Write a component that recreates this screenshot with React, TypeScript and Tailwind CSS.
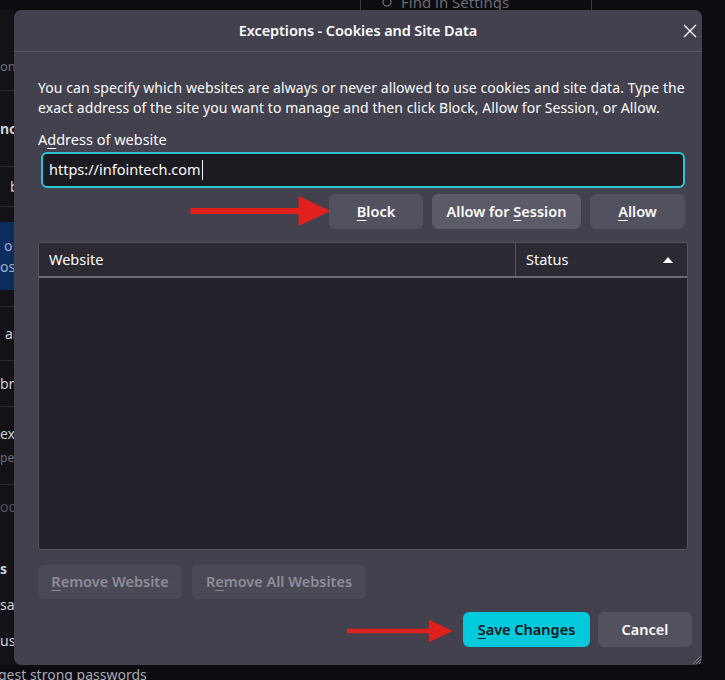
import React from "react";

const U = ({ children }: { children: React.ReactNode }) => (
  <span className="underline decoration-1 underline-offset-[3px]">{children}</span>
);

const Arrow = ({ className }: { className: string }) => (
  <svg className={className} viewBox="0 0 140 32" fill="none">
    <rect x="0" y="13" width="112" height="6" fill="#e0201c" />
    <path d="M108 1 L140 16 L108 31 Z" fill="#e0201c" />
  </svg>
);

const Backdrop = () => (
  <div className="flex h-full flex-col">
    <div className="flex h-[10px]">
      <div className="w-[360px]" />
      <div className="relative -mt-[4px] flex h-[14px] w-[232px] items-center gap-2 border-x border-[#3a3944] pl-[20px] text-[15px] leading-none text-[#6b6a75]">
        <svg width="12" height="12" viewBox="0 0 12 12" fill="none" stroke="#6b6a75" strokeWidth="1.3">
          <circle cx="6" cy="5" r="4" />
        </svg>
        <span className="-mt-[2px]">Find in Settings</span>
      </div>
    </div>
    <div className="flex flex-1">
      <div className="flex w-[14px] flex-col overflow-hidden whitespace-nowrap bg-[#131217] text-[14px] text-[#8f8f99]">
        <div className="h-[34px]" />
        <div className="flex h-[46px] items-center text-[13px] text-[#6f6e79]">on</div>
        <div className="flex h-[76px] items-center border-t border-[#2a2931] font-bold text-[#cfcfd6]">nc</div>
        <div className="flex h-[40px] items-center border-t border-[#2a2931] pl-[10px] text-[#cfcfd6]">br</div>
        <div className="h-[16px] border-t border-[#2a2931]" />
        <div className="flex h-[68px] flex-col justify-center bg-[#0d2c5e] pl-[4px] leading-[21px] text-[#9fb0cc]">
          <span>o</span>
          <span className="-ml-[4px]">os</span>
        </div>
        <div className="h-[16px]" />
        <div className="flex h-[54px] items-center border-t border-[#2a2931] pl-[5px] text-[#cfcfd6]">ar</div>
        <div className="flex h-[46px] items-center border-t border-[#2a2931] text-[#cfcfd6]">br</div>
        <div className="flex h-[78px] flex-col justify-center border-t border-[#2a2931] leading-[24px]">
          <span className="text-[#cfcfd6]">ex</span>
          <span className="text-[12px] text-[#6f6e79]">pec</span>
        </div>
        <div className="flex h-[44px] items-center border-t border-[#2a2931] text-[#55545e]">oo</div>
        <div className="h-[24px]" />
        <div className="flex h-[32px] items-center font-bold text-[#cfcfd6]">s</div>
        <div className="flex h-[40px] items-center text-[#cfcfd6]">sav</div>
        <div className="flex h-[32px] items-center text-[#cfcfd6]">usc</div>
      </div>
      <div className="flex-1" />
    </div>
    <div className="h-[15px] whitespace-nowrap text-[14px] leading-[20px] text-[#a9a9b3]">
      <span className="-ml-[2px]">gest strong passwords</span>
    </div>
  </div>
);

export default function App() {
  return (
    <div className="relative h-[680px] w-[725px] overflow-hidden bg-[#0d0c11] font-['Noto_Sans',sans-serif] text-[#fbfbfe]">
      <Backdrop />

      <div className="absolute left-[14px] top-[10px] flex h-[655px] w-[688px] flex-col rounded-[7px] bg-[#42414d]">
        <div className="relative flex h-[42px] items-center justify-center border-b border-[#575662]">
          <span className="mt-[1px] text-[14.5px] font-semibold tracking-[-0.1px]">Exceptions - Cookies and Site Data</span>
          <button className="absolute right-[5px] top-[14px] text-[#fbfbfe]">
            <svg width="14" height="14" viewBox="0 0 14 14" stroke="currentColor" strokeWidth="1.4">
              <path d="M1 1 L13 13 M13 1 L1 13" />
            </svg>
          </button>
        </div>

        <div className="flex flex-1 flex-col pl-[24px] pr-[14px]">
          <p className="mt-[26px] text-[14px] leading-[20px] tracking-[0.08px]">
            You can specify which websites are always or never allowed to use cookies and site data. Type the exact
            address of the site you want to manage and then click Block, Allow for Session, or Allow.
          </p>
          <label className="mt-[11px] text-[14.5px] leading-[20px]">
            A<U>d</U>dress of website
          </label>
          <div className="mx-[3px] mt-[3px] flex h-[36px] items-center rounded-[6px] border-2 border-[#2fc4d2] bg-[#1c1b22] px-[6px] text-[14.5px]">
            https://infointech.com<span className="ml-[1px] h-[20px] w-[1px] bg-[#fbfbfe]" />
          </div>
          <div className="mr-[3px] mt-[6px] flex justify-end gap-[9px] text-[14.5px] font-semibold">
            <button className="h-[35px] w-[94px] rounded-[6px] bg-[#52515e]">
              <U>B</U>lock
            </button>
            <button className="h-[35px] w-[149px] rounded-[6px] bg-[#5b5a67]">
              Allow for <U>S</U>ession
            </button>
            <button className="h-[35px] w-[95px] rounded-[6px] bg-[#52515e]">
              <U>A</U>llow
            </button>
          </div>

          <div className="mt-[13px] flex h-[308px] flex-col overflow-hidden rounded-[3px] border border-[#55545f] bg-[#23222b]">
            <div className="flex h-[35px] border-b-2 border-[#6a6975] bg-[#2b2a33] text-[14.5px]">
              <div className="flex w-[477px] items-center border-r border-[#55545f] pl-[10px]">Website</div>
              <div className="flex flex-1 items-center justify-between pl-[10px] pr-[14px]">
                <span>Status</span>
                <svg width="10" height="6" viewBox="0 0 10 6">
                  <path d="M0 6 L5 0 L10 6 Z" fill="#fbfbfe" />
                </svg>
              </div>
            </div>
            <div className="flex-1" />
          </div>

          <div className="mt-[15px] flex gap-[10px] text-[14.5px] font-semibold text-[#8e8d98]">
            <button className="h-[34px] w-[144px] rounded-[6px] bg-[#4a4955]">
              <U>R</U>emove Website
            </button>
            <button className="h-[34px] w-[174px] rounded-[6px] bg-[#4a4955]">
              R<U>e</U>move All Websites
            </button>
          </div>

          <div className="-mr-[4px] mt-[13px] flex justify-end gap-[8px] text-[14.5px] font-semibold">
            <button className="h-[35px] w-[127px] rounded-[6px] bg-[#00cadb] text-[#15141a]">
              <U>S</U>ave Changes
            </button>
            <button className="h-[35px] w-[94px] rounded-[6px] bg-[#52515e]">Cancel</button>
          </div>
        </div>

        <svg className="absolute bottom-[1px] right-[1px]" width="10" height="10" viewBox="0 0 10 10" stroke="#8a8994" strokeWidth="0.8">
          <path d="M10 2 L2 10 M10 5 L5 10 M10 8 L8 10" />
        </svg>
      </div>

      <Arrow className="absolute left-[190px] top-[195px] h-[32px] w-[141px]" />
      <Arrow className="absolute left-[347px] top-[615px] h-[32px] w-[106px]" />
    </div>
  );
}
